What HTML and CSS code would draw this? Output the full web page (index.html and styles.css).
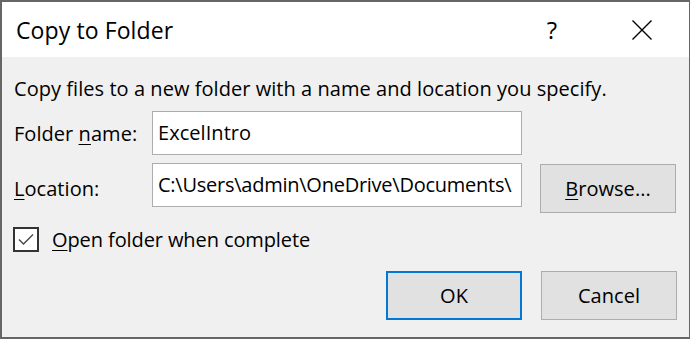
FILE: index.html
```html
<!DOCTYPE html>
<html>
<head>
<meta charset="utf-8">
<link rel="stylesheet" href="styles.css">
</head>
<body>
<div class="dialog">
  <div class="titlebar">
    <div class="title">Copy to Folder</div>
    <div class="tb-btn help">?</div>
    <div class="tb-btn close">
      <svg width="20" height="20" viewBox="0 0 20 20"><path d="M0.5 0.5 L19.5 19.5 M19.5 0.5 L0.5 19.5" stroke="#000" stroke-width="1.4" fill="none"/></svg>
    </div>
  </div>
  <div class="content">
    <div class="desc">Copy files to a new folder with a name and location you specify.</div>
    <div class="row row-name">
      <div class="label">Folder <u>n</u>ame:</div>
      <div class="input">ExcelIntro</div>
    </div>
    <div class="row row-loc">
      <div class="label"><u>L</u>ocation:</div>
      <div class="input path">C:\Users\admin\OneDrive\Documents\</div>
      <div class="btn browse"><u>B</u>rowse...</div>
    </div>
    <div class="check-row">
      <div class="checkbox">
        <svg width="22" height="22" viewBox="0 0 22 22"><path d="M4 11.5 L8.5 16 L18 6.5" stroke="#444" stroke-width="1.3" fill="none"/></svg>
      </div>
      <div class="check-label"><u>O</u>pen folder when complete</div>
    </div>
    <div class="actions">
      <div class="btn ok">OK</div>
      <div class="btn">Cancel</div>
    </div>
  </div>
</div>
</body>
</html>
```
FILE: styles.css
```css
* { box-sizing: border-box; }
html, body { margin: 0; padding: 0; }
body {
  width: 690px;
  height: 339px;
  background: #666666;
  padding: 2px 1px 2px 2px;
  font-family: "Open Sans", "Noto Sans", sans-serif;
  color: #000;
  overflow: hidden;
}
.dialog {
  width: 687px;
  height: 335px;
  background: #f0f0f0;
  display: flex;
  flex-direction: column;
}
.titlebar {
  height: 55px;
  background: #fff;
  display: flex;
  align-items: center;
  padding-left: 14px;
}
.title {
  font-size: 23px;
  flex: 1;
  letter-spacing: 0.1px;
}
.tb-btn {
  display: flex;
  align-items: center;
  justify-content: center;
}
.help {
  font-size: 24px;
  width: 14px;
  margin-right: 73px;
}
.close {
  width: 20px;
  margin-right: 37px;
}
.content {
  flex: 1;
  padding: 0 12px 0 11px;
  font-size: 20px;
  letter-spacing: 0.05px;
}
.desc {
  margin-top: 19px;
  height: 26px;
  line-height: 26px;
  padding-left: 1px;
  white-space: nowrap;
}
.row {
  display: flex;
  align-items: center;
}
.row-name { margin-top: 9px; height: 44px; }
.row-loc { margin-top: 8px; height: 50px; }
.label {
  width: 139px;
  padding-left: 1px;
}
u { text-underline-offset: 3px; text-decoration-thickness: 1px; }
.input {
  width: 370px;
  height: 44px;
  background: #fff;
  border: 1px solid #adadad;
  padding-left: 5px;
  line-height: 42px;
  white-space: nowrap;
  overflow: hidden;
}
.path { letter-spacing: -0.25px; }
.row-loc .input { align-self: flex-start; }
.btn {
  width: 136px;
  height: 49px;
  background: #e1e1e1;
  border: 1px solid #adadad;
  display: flex;
  align-items: center;
  justify-content: center;
}
.browse { margin-left: 18px; align-self: flex-end; }
.check-row {
  display: flex;
  align-items: center;
  margin-top: 13px;
  height: 26px;
}
.checkbox {
  width: 26px;
  height: 25px;
  border: 2px solid #333;
  background: #fff;
  display: flex;
  align-items: center;
  justify-content: center;
}
.check-label { margin-left: 13px; letter-spacing: -0.1px; }
.actions {
  display: flex;
  justify-content: flex-end;
  gap: 19px;
  margin-top: 19px;
}
.ok { border: 2px solid #0078d7; }
```
